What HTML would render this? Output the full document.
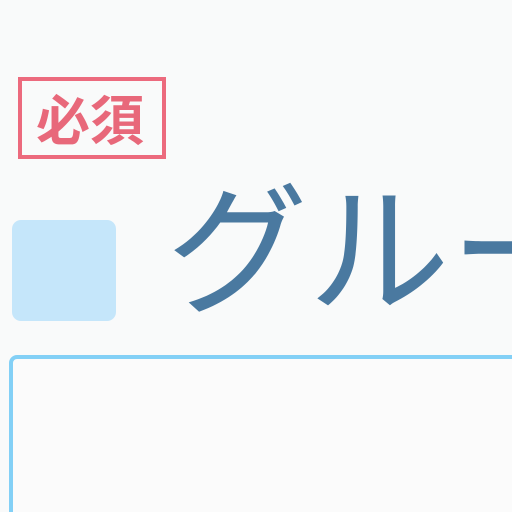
<!DOCTYPE html>
<html><head><meta charset="utf-8"><style>
html,body{margin:0;padding:0;width:512px;height:512px;overflow:hidden;background:#f9fafa}
#w{position:relative;width:512px;height:512px;overflow:hidden}
.badge{position:absolute;left:18px;top:77px;width:140px;height:74px;border:4px solid #ec6a7d;}
.badge span{position:absolute;left:14px;top:-1px;font:bold 54px "Noto Sans CJK JP",sans-serif;color:#e8687a;letter-spacing:0px;line-height:74px}
.sq{position:absolute;left:12px;top:220px;width:104px;height:101px;background:#c5e6fa;border-radius:9px}
.t{position:absolute;left:166px;top:150px;font:400 142px "Noto Sans CJK JP",sans-serif;color:#4a79a0;white-space:nowrap;line-height:180px}
.box{position:absolute;left:9px;top:355px;width:520px;height:180px;border:4px solid #83d0f6;border-radius:8px;background:#fbfbfb}
</style></head><body><div id="w">
<div class="badge"><span>必須</span></div>
<div class="sq"></div>
<div class="t">グルー</div>
<div class="box"></div>
</div></body></html>
